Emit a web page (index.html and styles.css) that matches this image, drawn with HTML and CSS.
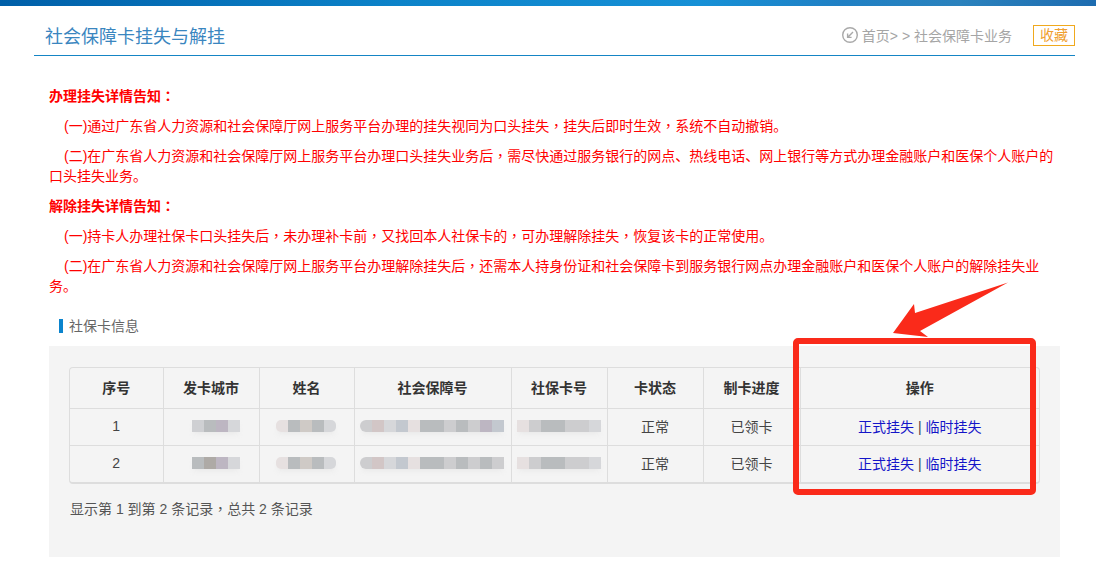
FILE: index.html
```html
<!DOCTYPE html>
<html lang="zh-CN">
<head>
<meta charset="utf-8">
<title>社会保障卡挂失与解挂</title>
<link rel="stylesheet" href="styles.css">
</head>
<body>
<div class="topbar"></div>
<main class="main">
  <header class="head">
    <h1 class="title">社会保障卡挂失与解挂</h1>
    <div class="crumbs">
      <svg class="back" width="18" height="18" viewBox="0 0 18 18"><circle cx="9" cy="9" r="7.3" fill="none" stroke="#a9a9a9" stroke-width="1.4"/><path d="M12 6 L6.8 11.2 M6.6 7.4 V11.4 H10.6" fill="none" stroke="#a9a9a9" stroke-width="1.4"/></svg>
      <span>首页&gt; &gt; 社会保障卡业务</span>
      <a class="fav">收藏</a>
    </div>
  </header>
  <section class="notice">
    <p class="strong">办理挂失详情告知<span class="pu" lang="zh-TW">：</span></p>
    <p class="ind">(一)通过广东省人力资源和社会保障厅网上服务平台办理的挂失视同为口头挂失<span class="pu" lang="zh-TW">，</span>挂失后即时生效<span class="pu" lang="zh-TW">，</span>系统不自动撤销。</p>
    <p class="ind">(二)在广东省人力资源和社会保障厅网上服务平台办理口头挂失业务后<span class="pu" lang="zh-TW">，</span>需尽快通过服务银行的网点、热线电话、网上银行等方式办理金融账户和医保个人账户的口头挂失业务。</p>
    <p class="strong">解除挂失详情告知<span class="pu" lang="zh-TW">：</span></p>
    <p class="ind">(一)持卡人办理社保卡口头挂失后<span class="pu" lang="zh-TW">，</span>未办理补卡前<span class="pu" lang="zh-TW">，</span>又找回本人社保卡的<span class="pu" lang="zh-TW">，</span>可办理解除挂失<span class="pu" lang="zh-TW">，</span>恢复该卡的正常使用。</p>
    <p class="ind">(二)在广东省人力资源和社会保障厅网上服务平台办理解除挂失后<span class="pu" lang="zh-TW">，</span>还需本人持身份证和社会保障卡到服务银行网点办理金融账户和医保个人账户的解除挂失业务。</p>
  </section>
  <h2 class="sub">社保卡信息</h2>
  <section class="panel">
    <div class="tablewrap">
      <table class="grid">
        <thead>
          <tr><th class="c1">序号</th><th class="c2">发卡城市</th><th class="c3">姓名</th><th class="c4">社会保障号</th><th class="c5">社保卡号</th><th class="c6">卡状态</th><th class="c7">制卡进度</th><th>操作</th></tr>
        </thead>
        <tbody>
          <tr>
            <td>1</td>
            <td><div class="mosaic m-city"><i class="a"></i><i class="b"></i><i class="c"></i><i class="d"></i></div></td>
            <td><div class="mosaic m-name"><i class="e"></i><i class="b"></i><i class="f"></i><i class="b"></i><i class="d"></i></div></td>
            <td><div class="mosaic m-ssn"><i class="g"></i><i class="h"></i><i class="d"></i><i class="i"></i><i class="e"></i><i class="b"></i><i class="b"></i><i class="g"></i><i class="b"></i><i class="g"></i><i class="c"></i><i class="i"></i></div></td>
            <td><div class="mosaic m-card"><i class="e"></i><i class="g"></i><i class="b"></i><i class="b"></i><i class="g"></i><i class="g"></i><i class="d"></i></div></td>
            <td>正常</td><td>已领卡</td>
            <td><a class="lnk">正式挂失</a> | <a class="lnk">临时挂失</a></td>
          </tr>
          <tr>
            <td>2</td>
            <td><div class="mosaic m-city"><i class="b"></i><i class="j"></i><i class="c"></i><i class="d"></i></div></td>
            <td><div class="mosaic m-name"><i class="e"></i><i class="b"></i><i class="f"></i><i class="b"></i><i class="d"></i></div></td>
            <td><div class="mosaic m-ssn"><i class="g"></i><i class="h"></i><i class="d"></i><i class="i"></i><i class="e"></i><i class="b"></i><i class="b"></i><i class="g"></i><i class="b"></i><i class="g"></i><i class="b"></i><i class="g"></i></div></td>
            <td><div class="mosaic m-card"><i class="e"></i><i class="g"></i><i class="b"></i><i class="b"></i><i class="g"></i><i class="g"></i><i class="d"></i></div></td>
            <td>正常</td><td>已领卡</td>
            <td><a class="lnk">正式挂失</a> | <a class="lnk">临时挂失</a></td>
          </tr>
        </tbody>
      </table>
    </div>
    <p class="pager">显示第 1 到第 2 条记录<span class="pu" lang="zh-TW">，</span>总共 2 条记录</p>
  </section>
</main>
<div class="mark"></div>
<svg class="arrow" width="120" height="60" viewBox="0 0 120 60"><path d="M115 0.5 L22 31 L21 22 L0 51 L35 55 L27 49 Z" fill="#fa2a1a"/></svg>
</body>
</html>
```
FILE: styles.css
```css
* { box-sizing: border-box; }
html, body { margin: 0; padding: 0; }
body {
  position: relative;
  width: 1096px;
  height: 562px;
  overflow: hidden;
  background: #fff;
  font-family: "Liberation Sans", "Noto Sans CJK SC", sans-serif;
  font-size: 14px;
  color: #444;
}
.topbar {
  height: 6px;
  background: linear-gradient(90deg, #005fa8 0, #0c83c9 400px, #1690d6 700px, #2080c4 840px, #2b82bd 960px, #1d6cb0 1096px);
}
.main { margin: 0 21px 0 34px; }
.head {
  height: 50px;
  display: flex;
  align-items: center;
  justify-content: space-between;
  padding: 9px 0 0 11px;
  border-bottom: 1px solid #1585c5;
}
.title {
  margin: 0;
  font-size: 18px;
  font-weight: 400;
  color: #3a86bf;
}
.crumbs {
  display: flex;
  align-items: center;
  color: #a5a5a5;
}
.back { margin-right: 3px; }
.fav {
  margin-left: 21px;
  width: 42px;
  height: 21px;
  line-height: 19px;
  text-align: center;
  border: 1px solid #f0a91e;
  color: #f0a030;
}
.notice {
  padding: 30px 15px 0;
  color: #f00;
  line-height: 20px;
}
.notice p { margin: 0 0 10px; }
.strong { font-weight: 700; }
.ind { text-indent: 15px; }
.pu { font-family: "Liberation Sans", "Noto Sans CJK TC", sans-serif; }
.sub {
  margin: 23px 0 0 25px;
  padding-left: 6px;
  border-left: 4px solid #0b84cd;
  font-size: 14px;
  font-weight: 400;
  line-height: 14px;
  color: #666;
}
.panel {
  margin: 13px 0 0 15px;
  width: 1011px;
  height: 211px;
  padding: 21px 20px 0;
  background: #f4f4f4;
}
.tablewrap {
  border: 1px solid #ddd;
  border-bottom-width: 2px;
  border-radius: 4px;
  overflow: hidden;
}
.grid {
  width: 100%;
  border-collapse: collapse;
  table-layout: fixed;
  text-align: center;
}
.grid th {
  height: 40px;
  padding: 0 0 2px;
  font-weight: 700;
  color: #333;
  border-left: 1px solid #ddd;
  border-bottom: 1px solid #ddd;
}
.grid td {
  height: 37px;
  padding: 0 0 2px;
  color: #444;
  border-left: 1px solid #ddd;
  border-bottom: 1px solid #ddd;
}
.grid tbody tr:last-child td { border-bottom: 0; }
.grid th:first-child, .grid td:first-child { border-left: 0; }
.c1 { width: 93px; }
.c2 { width: 96px; }
.c3 { width: 95px; }
.c4 { width: 157px; }
.c5 { width: 96px; }
.c6 { width: 96px; }
.c7 { width: 97px; }
.lnk { color: #1414c8; }
.mosaic {
  display: flex;
  height: 12px;
  filter: blur(0.4px);
  box-shadow: 0 4px 4px -2px rgba(225, 225, 225, .5);
}
.mosaic i { display: block; width: 12px; height: 12px; }
.m-city { width: 48px; margin-left: 28px; }
.m-name { width: 60px; margin-left: 16px; border-radius: 5px; overflow: hidden; }
.m-ssn { width: 144px; margin-left: 5px; border-radius: 6px 0 0 6px; overflow: hidden; }
.m-card { width: 84px; margin-left: 5px; }
.a { background: #cfd0d3; }
.b { background: #b9bcbe; }
.c { background: #bdb6c2; }
.d { background: #d6d7da; }
.e { background: #e6e0e0; }
.f { background: #cfcac6; }
.g { background: #cdcdcf; }
.h { background: #d2c6c6; }
.i { background: #c3c8cf; }
.j { background: #aeaaa6; }
.pager {
  margin: 15px 0 0 1px;
  line-height: 20px;
  color: #555;
}
.mark {
  position: absolute;
  left: 793px;
  top: 338px;
  width: 243px;
  height: 157px;
  border: 6px solid #fa2a1a;
  border-radius: 5px;
}
.arrow {
  position: absolute;
  left: 893px;
  top: 282px;
}
```
